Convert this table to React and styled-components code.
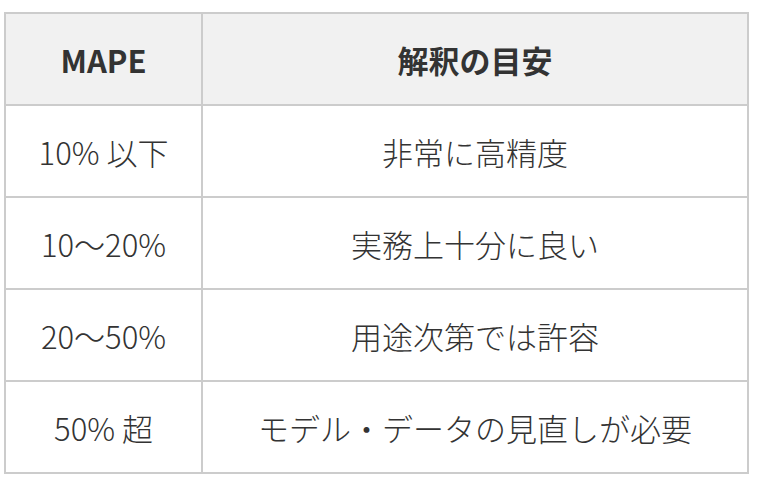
import React from 'react';
import styled, { createGlobalStyle } from 'styled-components';

const GlobalStyle = createGlobalStyle`
  html, body {
    margin: 0;
    padding: 0;
    background: #ffffff;
  }
  body {
    font-family: "Noto Sans CJK JP", "Noto Sans", sans-serif;
    color: #333333;
  }
`;

const rows = [
  ['10% 以下', '非常に高精度'],
  ['10〜20%', '実務上十分に良い'],
  ['20〜50%', '用途次第では許容'],
  ['50% 超', 'モデル・データの見直しが必要'],
];

const App = () => {
  return (
    <Page>
      <GlobalStyle />
      <Table>
        <colgroup>
          <col style={{ width: 197 }} />
          <col />
        </colgroup>
        <thead>
          <tr>
            <HeadCell>MAPE</HeadCell>
            <HeadCell>解釈の目安</HeadCell>
          </tr>
        </thead>
        <tbody>
          {rows.map(([mape, note]) => (
            <tr key={mape}>
              <Cell>{mape}</Cell>
              <Cell>{note}</Cell>
            </tr>
          ))}
        </tbody>
      </Table>
    </Page>
  );
};

const Page = styled.div`
  padding: 12px 0 0 4px;
`;

const Table = styled.table`
  width: 745px;
  border-collapse: collapse;
  table-layout: fixed;
`;

const HeadCell = styled.th`
  height: 90px;
  padding: 0;
  border: 2px solid #cccccc;
  background: #f1f1f1;
  font-size: 31px;
  font-weight: 700;
  color: #333333;
  text-align: center;
  vertical-align: middle;
`;

const Cell = styled.td`
  height: 90px;
  padding: 0;
  border: 2px solid #cccccc;
  font-size: 31px;
  font-weight: 300;
  color: #333333;
  text-align: center;
  vertical-align: middle;
  white-space: nowrap;
`;

export default App;
